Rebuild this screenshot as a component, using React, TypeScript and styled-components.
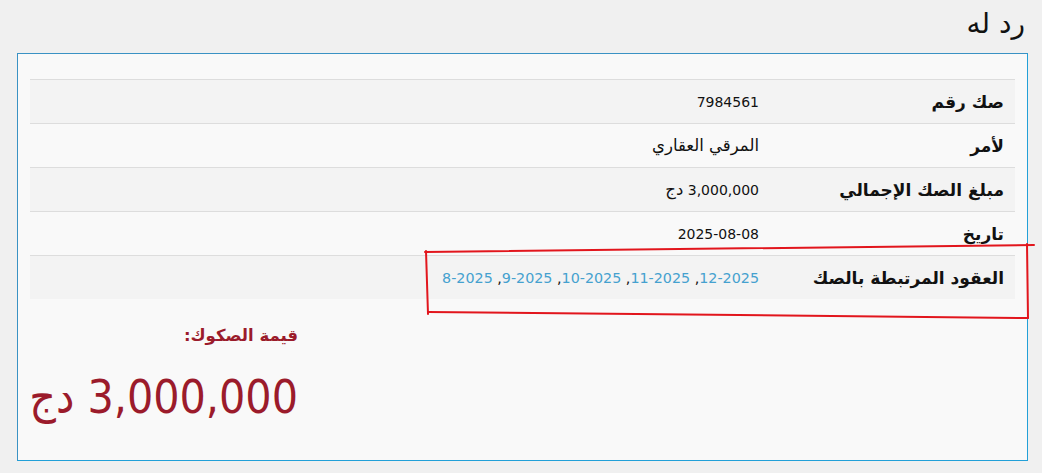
import React from "react";
import styled, { createGlobalStyle } from "styled-components";

const Global = createGlobalStyle`
  html, body { margin: 0; padding: 0; background: #f0f0f0; }
  body { font-family: "DejaVu Sans", "Noto Sans", sans-serif; color: #111; }
`;

const Page = styled.div`
  direction: rtl;
  padding: 8px 14px 12px 17px;
  position: relative;
`;

const Title = styled.h1`
  margin: 0 0 13px 0;
  padding-right: 3px;
  font-size: 28px;
  font-weight: normal;
  line-height: 32px;
  color: #111;
`;

const Panel = styled.div`
  border: 1px solid #22a0d8;
  border-top-color: #3a92c4;
  border-left-color: #3a92c4;
  background: #f9f9f9;
  padding: 25px 12px 0 12px;
  height: 408px;
  box-sizing: border-box;
  position: relative;
`;

const Table = styled.div`
  display: flex;
  flex-direction: column;
`;

const Row = styled.div<{ $shade: boolean }>`
  display: grid;
  grid-template-columns: 246px 1fr;
  height: 44px;
  align-items: center;
  border-top: 1px solid #dddddd;
  background: ${(p) => (p.$shade ? "#f3f3f3" : "#f9f9f9")};
  box-sizing: border-box;
`;

const Label = styled.div`
  padding: 1px 11px 0 10px;
  font-weight: bold;
  font-size: 17px;
  color: #111;
  white-space: nowrap;
`;

const Value = styled.div`
  padding: 0 10px;
  font-size: 14px;
  color: #111;
  white-space: nowrap;
`;

const Ar = styled.span`
  font-size: 16.5px;
`;

const Links = styled.div`
  padding: 0 10px;
  font-size: 14.3px;
  white-space: nowrap;
`;

const Link = styled.a`
  color: #45a1cf;
  text-decoration: none;
`;

const Sep = styled.span`
  color: #111;
`;

const Summary = styled.div`
  direction: rtl;
  width: 268px;
  margin-right: auto;
  margin-top: 27px;
`;

const SummaryLabel = styled.div`
  color: #9b1b2b;
  font-weight: bold;
  font-size: 16.5px;
  line-height: 20px;
`;

const SummaryValue = styled.div`
  color: #9b1b2b;
  font-family: "DejaVu Sans Condensed", "DejaVu Sans", sans-serif;
  font-size: 46px;
  line-height: 56px;
  margin-top: 23px;
  white-space: nowrap;
`;

const Annotation = styled.svg`
  position: absolute;
  left: 0;
  top: 0;
  pointer-events: none;
`;

const rows: { label: string; value: React.ReactNode }[] = [
  { label: "صك رقم", value: "7984561" },
  { label: "لأمر", value: <Ar>المرقي العقاري</Ar> },
  {
    label: "مبلغ الصك الإجمالي",
    value: (
      <>
        3,000,000 <Ar>دج</Ar>
      </>
    ),
  },
  { label: "تاريخ", value: "2025-08-08" },
];

const links = ["12-2025", "11-2025", "10-2025", "9-2025", "8-2025"];

export default function App() {
  return (
    <>
      <Global />
      <Page>
        <Title>رد له</Title>
        <Panel>
          <Table>
            {rows.map((r, i) => (
              <Row key={r.label} $shade={i % 2 === 0}>
                <Label>{r.label}</Label>
                <Value>{r.value}</Value>
              </Row>
            ))}
            <Row $shade={true}>
              <Label>العقود المرتبطة بالصك</Label>
              <Links>
                {links.map((l, i) => (
                  <React.Fragment key={l}>
                    <Link href="#">{l}</Link>
                    {i < links.length - 1 && <Sep>, </Sep>}
                  </React.Fragment>
                ))}
              </Links>
            </Row>
          </Table>
          <Summary>
            <SummaryLabel>قيمة الصكوك:</SummaryLabel>
            <SummaryValue>3,000,000 دج</SummaryValue>
          </Summary>
        </Panel>
        <Annotation width="1042" height="473" viewBox="0 0 1042 473">
          <g stroke="#e2161d" strokeWidth="2" fill="none" strokeLinecap="round">
            <line x1="425" y1="252" x2="1034" y2="245" />
            <line x1="1027" y1="244" x2="1028" y2="318" />
            <line x1="428" y1="312" x2="1028" y2="318" />
            <line x1="426" y1="251" x2="428" y2="314" />
          </g>
        </Annotation>
      </Page>
    </>
  );
}
